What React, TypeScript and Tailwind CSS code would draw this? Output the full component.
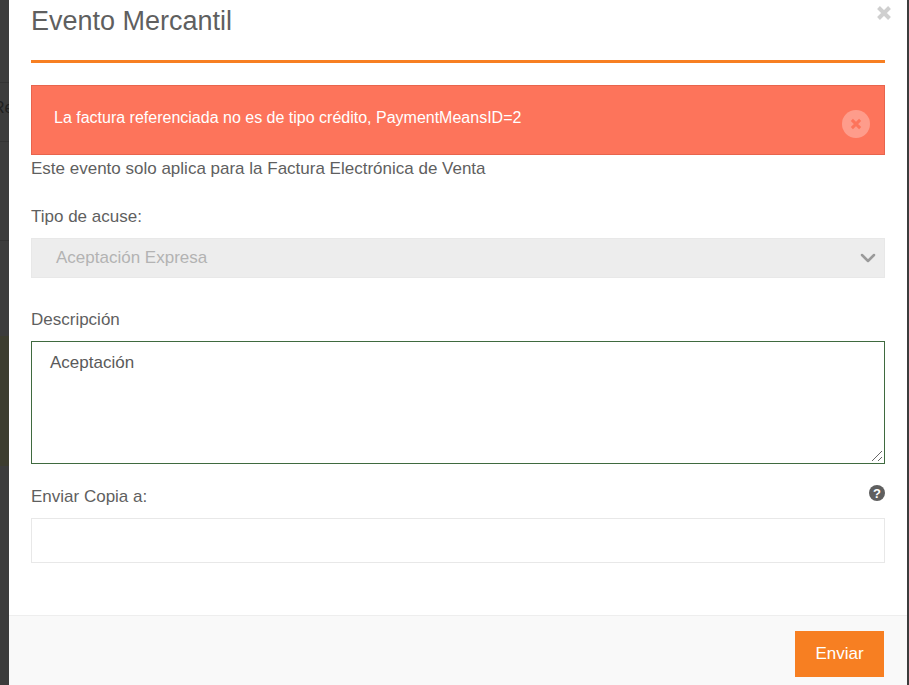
import { ChevronDown } from "lucide-react";

function CloseIcon({ className }: { className: string }) {
  return (
    <svg viewBox="0 0 16 16" className={className} fill="none" stroke="currentColor" strokeWidth="4" aria-hidden="true">
      <path d="M2.5 2.5 13.5 13.5M13.5 2.5 2.5 13.5" />
    </svg>
  );
}

export default function App() {
  return (
    <div className="relative flex h-[685px] w-[909px] overflow-hidden bg-[#3c3c3c] font-['Liberation_Sans',Arial,sans-serif] text-[#5f5f5f]">
      <div className="absolute left-0 top-[336px] h-[130px] w-[9px] bg-[#3d3d2f]" />
      <div className="absolute left-0 top-[82px] h-px w-[9px] bg-[#333333]" />
      <div className="absolute left-0 top-[141px] h-px w-[9px] bg-[#333333]" />
      <div className="absolute left-0 top-[240px] h-px w-[9px] bg-[#333333]" />
      <span className="absolute left-[-7px] top-[96px] text-base text-[#1f1f1f]">Re</span>

      <div className="relative z-10 ml-[9px] flex h-[685px] w-[898px] flex-col bg-white">
        <div className="flex-1 px-[22px]">
          <div className="relative h-[63px] border-b-[3px] border-[#f77f22]">
            <h1 className="text-[27px] leading-[42px]">Evento Mercantil</h1>
            <CloseIcon className="absolute right-[-7px] top-[5px] h-4 w-4 text-[#cfcfcf]" />
          </div>

          <div className="mt-[22px] flex h-[70px] items-start justify-between border border-[#e8644d] bg-[#fd745b] pl-[22px] pr-[14px] text-white">
            <p className="mt-[22px] text-base leading-5">La factura referenciada no es de tipo crédito, PaymentMeansID=2</p>
            <div className="mt-[24px] flex h-7 w-7 items-center justify-center rounded-full bg-[#fe9c8b] text-[#fd745b]">
              <CloseIcon className="h-3 w-3" />
            </div>
          </div>

          <p className="mt-[2px] text-[17px] leading-6">Este evento solo aplica para la Factura Electrónica de Venta</p>

          <label className="mt-[24px] block text-[17px] leading-6">Tipo de acuse:</label>
          <div className="mt-[9px] flex h-10 items-center justify-between border border-[#e8e8e8] bg-[#ededed] pl-6 pr-1 text-[17px] text-[#b3b3b3]">
            <span>Aceptación Expresa</span>
            <ChevronDown className="h-6 w-6 text-[#9a9a9a]" strokeWidth={2.5} />
          </div>

          <label className="mt-[30px] block text-[17px] leading-6">Descripción</label>
          <div className="relative mt-[9px] h-[123px] border border-[#3f6a3f] px-[18px] py-[9px] text-[17px] leading-6 text-[#5a5a5a]">
            Aceptación
            <svg viewBox="0 0 12 12" className="absolute bottom-px right-px h-3 w-3 text-[#666666]" fill="none" stroke="currentColor" strokeWidth="1" aria-hidden="true">
              <path d="M1 11 11 1M7 11 11 7" />
            </svg>
          </div>

          <div className="mt-[21px] flex items-start justify-between">
            <label className="text-[17px] leading-6">Enviar Copia a:</label>
            <svg viewBox="0 0 16 16" className="h-4 w-4 text-[#5f5f5f]" aria-hidden="true">
              <circle cx="8" cy="8" r="8" fill="currentColor" />
              <text x="8" y="12.5" textAnchor="middle" fontSize="13" fontWeight="700" fill="white">?</text>
            </svg>
          </div>
          <div className="mt-[9px] h-[45px] border border-[#e8e8e8]" />
        </div>

        <div className="flex h-[70px] justify-end border-t border-[#eeeeee] bg-[#f9f9f9] px-[23px] pt-[15px]">
          <button className="h-[46px] w-[89px] bg-[#f77f22] text-[17px] text-white">Enviar</button>
        </div>
      </div>
    </div>
  );
}
